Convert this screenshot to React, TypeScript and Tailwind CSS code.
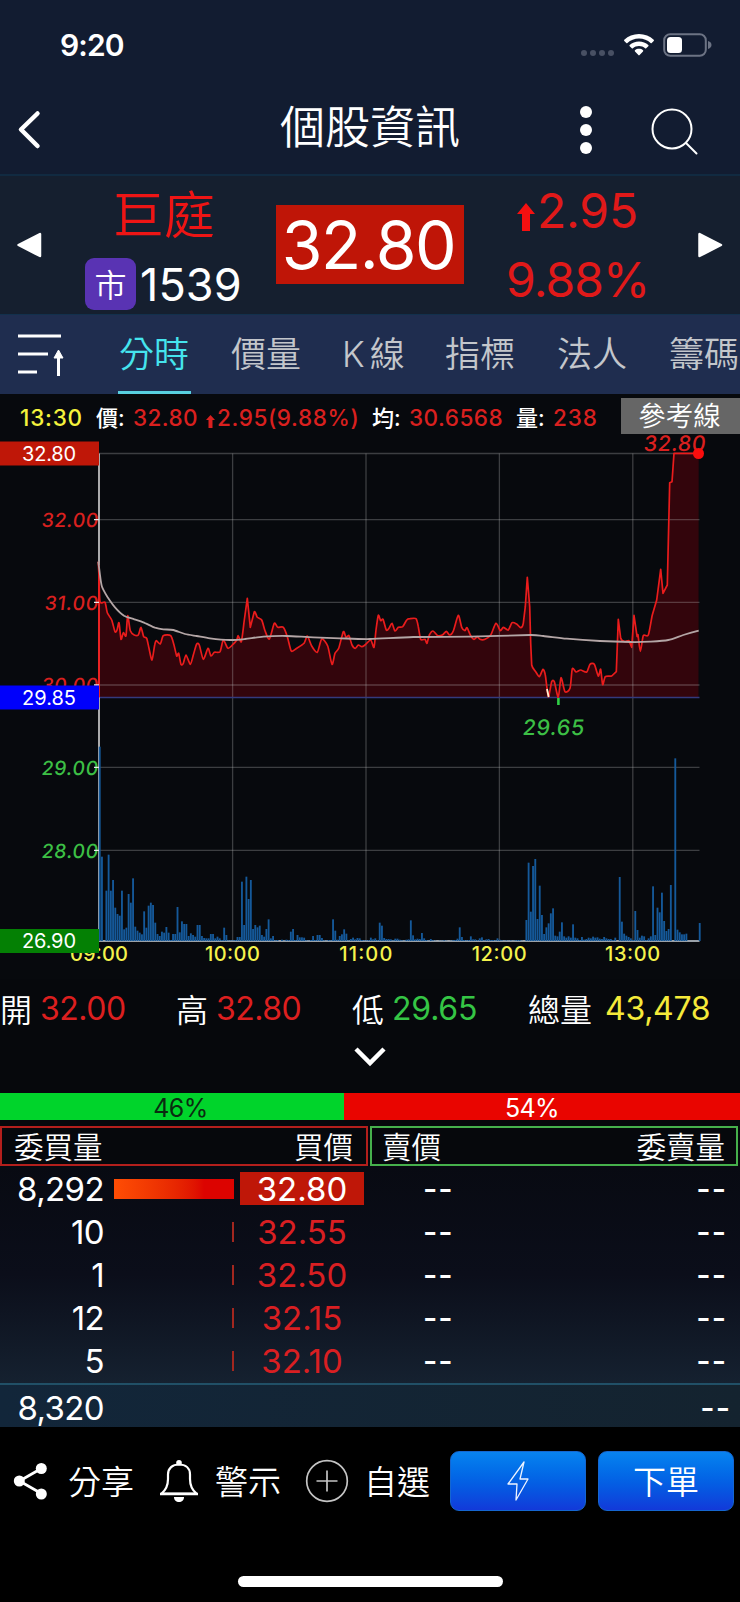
import React from "react";

const LATIN = "font-['Inter','Liberation_Sans',sans-serif]";
const HAN = "font-['Noto_Sans_CJK_TC',sans-serif]";

const PLOT = { left: 99, right: 699, top: 58.5, bottom: 546 };
const HOUR = 133.4;

/* Intraday price trace, in thirds of a chart pixel. */
const PRICE: number[][] = [
  [295, 515], [297, 560], [300, 635], [315, 637], [322, 668], [335, 690], [345, 725], [351, 720], [357, 698], [363, 748],
  [370, 728], [378, 737], [383, 677], [391, 722], [403, 735], [415, 735], [423, 712], [431, 740], [440, 745], [447, 775],
  [456, 810], [464, 765], [469, 752], [481, 762], [490, 737], [512, 737], [522, 765], [530, 798], [536, 790], [543, 823],
  [550, 820], [558, 795], [571, 823], [580, 795], [590, 762], [598, 765], [610, 808], [624, 775], [633, 798], [643, 787],
  [660, 785], [670, 750], [684, 775], [700, 762], [710, 750], [715, 737], [724, 755], [733, 690], [742, 625], [751, 712],
  [763, 665], [772, 682], [785, 690], [795, 722], [808, 747], [823, 700], [833, 712], [850, 712], [862, 740], [874, 783],
  [890, 775], [912, 760], [922, 738], [935, 768], [952, 787], [965, 747], [983, 768], [996, 823], [1005, 790], [1016, 775],
  [1030, 725], [1038, 742], [1047, 737], [1056, 765], [1066, 775], [1075, 765], [1085, 770], [1095, 765], [1112, 750],
  [1122, 772], [1128, 720], [1135, 676], [1142, 692], [1149, 688], [1159, 720], [1167, 715], [1176, 700], [1185, 723],
  [1195, 712], [1208, 710], [1220, 690], [1230, 686], [1248, 686], [1255, 710], [1262, 748], [1275, 748], [1281, 760],
  [1288, 735], [1299, 723], [1313, 737], [1327, 735], [1339, 724], [1349, 735], [1360, 723], [1375, 676], [1385, 712],
  [1395, 722], [1401, 713], [1412, 737], [1422, 748], [1432, 740], [1440, 748], [1455, 748], [1472, 735], [1488, 700],
  [1501, 722], [1510, 712], [1525, 720], [1536, 698], [1550, 702], [1562, 713], [1570, 700], [1576, 650], [1582, 562],
  [1589, 650], [1592, 760], [1595, 825], [1607, 845], [1618, 860], [1629, 838], [1636, 855], [1645, 920], [1655, 875],
  [1663, 875], [1675, 922], [1683, 863], [1695, 905], [1710, 895], [1717, 836], [1728, 846], [1742, 840], [1760, 846],
  [1770, 823], [1783, 823], [1795, 858], [1802, 838], [1808, 884], [1816, 860], [1835, 858], [1849, 845], [1855, 688],
  [1862, 745], [1875, 755], [1887, 752], [1895, 772], [1902, 676], [1911, 738], [1914, 735], [1921, 784], [1930, 737],
  [1945, 735], [1957, 675], [1970, 630], [1982, 538], [1989, 610], [2002, 585], [2009, 278], [2016, 275], [2022, 190],
  [2096, 190],
].map(([x, y]) => [x / 3, y / 3 - 5]);

const AVERAGE: number[][] = [
  [295, 515], [300, 555], [306, 590], [322, 620], [345, 652], [372, 677], [403, 688], [430, 697], [465, 713], [490, 718],
  [520, 720], [555, 732], [590, 738], [630, 745], [690, 750], [735, 747], [790, 740], [860, 738], [940, 742], [1020, 745],
  [1110, 747], [1240, 741], [1410, 740], [1590, 735], [1630, 738], [1700, 746], [1800, 753], [1890, 756], [1950, 755],
  [2005, 750], [2050, 735], [2096, 722],
].map(([x, y]) => [x / 3, y / 3 - 5]);

/* Volume per minute, 09:00 - 13:30. */
const VOLUME: number[] = [
  583, 253, 0, 151, 259, 151, 183, 100, 81, 76, 151, 35, 40, 141, 115, 188, 43, 31, 25, 20,
  89, 40, 106, 115, 108, 55, 21, 15, 28, 25, 42, 25, 3, 21, 21, 102, 26, 59, 51, 51,
  15, 23, 18, 13, 48, 48, 15, 9, 8, 8, 21, 21, 8, 13, 8, 3, 40, 18, 2, 2,
  2, 3, 12, 12, 178, 48, 193, 126, 183, 36, 48, 41, 46, 18, 13, 36, 65, 8, 15, 2,
  3, 0, 4, 1, 4, 3, 28, 36, 3, 18, 11, 11, 10, 2, 1, 3, 15, 3, 18, 18,
  9, 2, 1, 3, 2, 65, 31, 4, 15, 20, 35, 22, 2, 6, 10, 5, 9, 8, 3, 2,
  2, 3, 10, 5, 8, 3, 55, 46, 9, 6, 6, 5, 2, 7, 7, 4, 2, 1, 4, 5,
  62, 17, 5, 7, 6, 24, 8, 3, 1, 6, 2, 1, 0, 1, 1, 2, 1, 0, 1, 2,
  3, 7, 41, 12, 3, 2, 3, 14, 5, 5, 3, 8, 11, 2, 5, 6, 3, 3, 2, 8,
  4, 2, 1, 2, 1, 2, 1, 2, 3, 3, 1, 0, 63, 235, 88, 225, 246, 66, 166, 78,
  21, 41, 53, 83, 98, 16, 14, 28, 56, 14, 10, 14, 10, 50, 10, 8, 3, 12, 4, 6,
  10, 8, 13, 10, 11, 7, 6, 12, 8, 6, 6, 3, 10, 0, 192, 58, 22, 16, 12, 8,
  3, 90, 33, 10, 16, 14, 3, 8, 14, 164, 18, 100, 86, 145, 60, 30, 36, 168, 0, 548,
  34, 26, 20, 20, 22, 0, 0, 0, 0, 0, 54,
];

/* Lightly rounded curve through the points; steep moves stay straight. */
function curve(pts: number[][]) {
  return pts
    .map((p, i) => {
      if (i === 0) return `M${p[0].toFixed(1)} ${p[1].toFixed(1)}`;
      const a = pts[i - 1];
      const before = pts[i - 2] ?? a;
      const after = pts[i + 1] ?? p;
      const steep = Math.max(Math.abs(p[1] - a[1]), Math.abs(a[1] - before[1]), Math.abs(after[1] - p[1])) > 25;
      const k = steep ? 0 : 0.12;
      const c = [a[0] + (p[0] - before[0]) * k, a[1] + (p[1] - before[1]) * k, p[0] - (after[0] - a[0]) * k, p[1] - (after[1] - a[1]) * k];
      return `C${c.map((n) => n.toFixed(1)).join(" ")} ${p[0].toFixed(1)} ${p[1].toFixed(1)}`;
    })
    .join("");
}

function StatusBar() {
  return (
    <div className="flex h-[90px] items-center pl-[60px] pr-7">
      <span className={`${LATIN} text-[30px] font-semibold leading-none tracking-[-0.900px]`}>9:20</span>
      <div className="ml-auto flex items-center">
        <div className="mr-[10px] mt-4 flex gap-[3px]">
          {[0, 1, 2, 3].map((i) => (
            <i key={i} className="size-[6px] rounded-full bg-[#485063]" />
          ))}
        </div>
        <svg className="mr-[9px] h-[22px] w-[30px]" viewBox="0 0 30 22" fill="#fff">
          <path d="M15 0C9.300 0 4.100 2.200.3 5.800c-.4.300-.4.800 0 1.200l2 2.100c.300.300.8.300 1.100 0C6.500 6.200 10.500 4.600 15 4.600s8.500 1.600 11.600 4.500c.300.300.8.300 1.100 0l2-2.100c.4-.4.4-.9 0-1.200C25.900 2.200 20.700 0 15 0z" />
          <path d="M15 7.400c-3.600 0-6.900 1.400-9.300 3.600-.4.300-.4.800 0 1.200l2.100 2.100c.300.300.8.300 1.100 0 1.600-1.400 3.800-2.300 6.100-2.300s4.500.9 6.100 2.300c.300.300.8.300 1.100 0l2.100-2.100c.4-.4.4-.9 0-1.200-2.400-2.200-5.700-3.600-9.300-3.600z" />
          <path d="M15 14.800c-1.500 0-2.900.5-4 1.400-.4.300-.4.800 0 1.200l3.400 3.700c.300.400.8.400 1.200 0l3.400-3.700c.4-.4.4-.9 0-1.200-1.100-.9-2.500-1.400-4-1.400z" />
        </svg>
        <svg className="h-6 w-[49px]" viewBox="0 0 49 24">
          <rect x="1.200" y="1.200" width="41.600" height="21.600" rx="6" fill="none" stroke="#6c7384" strokeWidth="2" />
          <rect x="4" y="4" width="15" height="16" rx="3.500" fill="#fff" />
          <path d="M45 8c2.500.8 3.500 2.200 3.500 4S47.500 15.200 45 16z" fill="#6c7384" />
        </svg>
      </div>
    </div>
  );
}

function Header() {
  return (
    <div className="flex h-[84px] items-center">
      <svg className="ml-4 mt-[-7px] h-[42px] w-7" viewBox="0 0 28 42" fill="none" stroke="#fff" strokeWidth="4.500" strokeLinecap="round" strokeLinejoin="round">
        <path d="M21.500 5.500 5 21.500 21.500 38" />
      </svg>
      <h1 className={`${HAN} ml-[236px] mt-[-16px] text-[45px] font-[350] leading-none`}>個股資訊</h1>
      <div className="ml-[120px] mt-[-5px] flex flex-col gap-[6px]">
        {[0, 1, 2].map((i) => (
          <i key={i} className="size-3 rounded-full bg-white" />
        ))}
      </div>
      <svg className="ml-[58px] mt-[-2px] h-12 w-12" viewBox="0 0 48 48" fill="none" stroke="#fff" strokeWidth="2" strokeLinecap="round">
        <circle cx="22" cy="22" r="19.500" />
        <path d="m36 36 10.500 10.500" />
      </svg>
    </div>
  );
}

function UpArrow({ className }: { className: string }) {
  return (
    <svg className={className} viewBox="0 0 18 28" preserveAspectRatio="none" fill="currentColor">
      <path d="M9 0 18 11H13V28H5V11H0z" />
    </svg>
  );
}

function Quote() {
  return (
    <div className="flex h-[140px] border-t-2 border-[#112a41] bg-[#151f2f]">
      <div className="flex w-[84px] items-center pb-px pl-4">
        <svg className="h-[26px] w-[26px]" viewBox="0 0 26 26">
          <path d="M24 2v22L2.500 13z" fill="#fff" stroke="#fff" strokeWidth="2.500" strokeLinejoin="round" />
        </svg>
      </div>
      <div className="w-[192px] pt-[8px]">
        <div className={`${HAN} ml-[29px] text-[51px] font-[350] leading-[56px] text-[#ee1515]`}>巨庭</div>
        <div className="mt-[18px] flex items-center">
          <span className={`${HAN} ml-px flex h-[52px] w-[51px] items-center justify-center rounded-[9px] bg-[#5933b3] pb-[2px] text-[32px] font-[350] leading-none`}>市</span>
          <span className={`${LATIN} ml-[4px] text-[45px] leading-none tracking-[0.100px]`}>1539</span>
        </div>
      </div>
      <div className={`${LATIN} mt-[29px] flex h-[79px] w-[188px] items-center justify-center bg-[#bf1507] pr-[3px] pt-px text-[66px] leading-none tracking-[-1.500px]`}>
        32.80
      </div>
      <div className={`${LATIN} w-[182px] pl-[42px] pt-[10px] text-[48px] leading-none text-[#e01919]`}>
        <div className="flex h-[50px] items-center pl-[11px]">
          <UpArrow className="mr-[2px] mt-3 h-7 w-[18px] text-[#f51010]" />
          <span className="tracking-[-0.200px]">2.95</span>
        </div>
        <div className="mt-[20px] h-[50px] tracking-[-0.900px]">9.88%</div>
      </div>
      <div className="flex grow items-center pb-px pl-[51px]">
        <svg className="h-[26px] w-[26px]" viewBox="0 0 26 26">
          <path d="M2.500 2v22L24 13z" fill="#fff" stroke="#fff" strokeWidth="2.500" strokeLinejoin="round" />
        </svg>
      </div>
    </div>
  );
}

function Tabs() {
  return (
    <nav className={`${HAN} flex h-[80px] overflow-hidden border-t border-[#12304c] bg-[#1f2d4f] text-[35px] font-[350] leading-none text-[#c3c6cb]`}>
      <div className="w-[118px] shrink-0 pl-[17px] pt-[18px]">
        <svg className="h-11 w-12" viewBox="0 0 48 44" stroke="#fff" strokeWidth="3" fill="#fff">
          <path d="M1 3h43M1 21h30M1 39h19M41.500 43V22" />
          <path d="m41.500 17 4.500 8h-9z" strokeWidth="1" />
        </svg>
      </div>
      <span className="h-[79px] w-[73px] shrink-0 whitespace-nowrap border-b-[3px] border-[#58cfe0] pl-px pt-[19px] text-[#45e4ee]">分時</span>
      <span className="ml-[40px] w-[73px] shrink-0 pt-[19px]">價量</span>
      <span className="ml-[38px] w-[64px] shrink-0 whitespace-nowrap pt-[19px]">
        <span className={`${LATIN} mr-[5px]`}>K</span>線
      </span>
      <span className="ml-[39px] w-[73px] shrink-0 pt-[19px]">指標</span>
      <span className="ml-[39px] w-[73px] shrink-0 pt-[19px]">法人</span>
      <span className="ml-[39px] w-[73px] shrink-0 pt-[19px]">籌碼</span>
    </nav>
  );
}

function InfoLine() {
  return (
    <div className={`${LATIN} flex h-[48px] items-center whitespace-nowrap text-[22.500px] font-medium leading-none text-[#d9201f]`}>
      <span className="ml-5 w-[76px] tracking-[0.800px] text-[#f4f23c]">13:30</span>
      <span className="mt-[-3px] w-[37px] text-[22px] text-white"><span className={HAN}>價</span>:</span>
      <span className="w-[73px] tracking-[0.400px]">32.80</span>
      <UpArrow className="mr-[2px] mt-[6px] h-[13px] w-[9px]" />
      <span className="w-[155px] tracking-[0.600px]">2.95(9.88%)</span>
      <span className="mt-[-3px] w-[37px] text-[22px] text-white"><span className={HAN}>均</span>:</span>
      <span className="w-[107px] tracking-[0.500px]">30.6568</span>
      <span className="mt-[-3px] w-[37px] text-[22px] text-white"><span className={HAN}>量</span>:</span>
      <span className="tracking-[0.900px]">238</span>
      <span className={`${HAN} ml-auto mt-[-4px] flex h-9 w-[119px] items-center justify-center bg-[#666] pb-[3px] pr-[2px] text-[27.500px] font-[350] leading-none text-white`}>參考線</span>
    </div>
  );
}

function Tag({ y, fill, label }: { y: number; fill: string; label: string }) {
  return (
    <g>
      <rect x="0" y={y - 12} width="99" height="24" fill={fill} />
      <text x="49" y={y + 7} textAnchor="middle" fontSize="20" fill="#fff" textLength="54">{label}</text>
    </g>
  );
}

function Slanted({ x, y, width, size = 19.5, children }: { x: number; y: number; width: number; size?: number; children: string }) {
  return (
    <text transform={`translate(${x} ${y}) skewX(-7)`} fontSize={size} textLength={width}>{children}</text>
  );
}

function Chart() {
  const base = 302.5;
  const price = curve(PRICE);
  return (
    <svg className={`${LATIN} block h-[585px] w-[740px]`} viewBox="0 0 740 585" fill="none">
      <path d={`${price}L${PLOT.right - 0.5} ${base}H${PRICE[0][0]}z`} fill="#33050c" />
      <g stroke="#b8b8b8" strokeOpacity="0.300" strokeWidth="1.300">
        {[58.5, 124.7, 207.4, 290, 372.4, 455.400].map((y) => (
          <path key={y} d={`M99 ${y}H699.500`} />
        ))}
        {[1, 2, 3, 4].map((h) => (
          <path key={h} d={`M${99.2 + h * HOUR} 58.500V546`} />
        ))}
      </g>
      <path d={`M99 ${base}H699.500`} stroke="#343a7d" strokeWidth="1.500" />
      <path d="M99 58.500V546" stroke="#f1f1f1" strokeWidth="1.400" />
      <path d="M99 546H699.500" stroke="#cdd5dc" strokeWidth="1.400" />
      {VOLUME.map((v, i) => (
        <rect key={i} x={98.800 + i * 2.2222} y={PLOT.bottom - v / 3} width="1.850" height={v / 3} fill="#15599a" />
      ))}
      <path d={`M99 170V${base}`} stroke="#f01414" strokeWidth="1.800" />
      <path d={price} stroke="#ea1c1c" strokeWidth="1.700" strokeLinejoin="round" />
      <path d={curve(AVERAGE)} stroke="#b4a6a6" strokeWidth="1.800" strokeLinejoin="round" />
      <path d="m547 294 1.700 8" stroke="#fff0d0" strokeWidth="1.800" />
      <path d="M558.400 303v7" stroke="#2fd046" strokeWidth="2.600" />
      <g fontWeight="500">
        <g fill="#d9201f">
          <Slanted x={41} y={132} width={56.5}>32.00</Slanted>
          <Slanted x={44} y={214.5} width={53.5}>31.00</Slanted>
          <Slanted x={41} y={297} width={56.5}>30.00</Slanted>
          <Slanted x={643} y={55.5} width={62} size={21.5}>32.80</Slanted>
        </g>
        <g fill="#3cbf45">
          <Slanted x={41} y={380} width={56.5}>29.00</Slanted>
          <Slanted x={41} y={462.5} width={56.5}>28.00</Slanted>
          <Slanted x={522} y={340} width={61.5} size={21.500}>29.65</Slanted>
        </g>
      </g>
      <path d="M94 124.700h5M94 207.400h5M94 290h5M94 372.400h5M94 455.400h5" stroke="#e8e8e8" strokeWidth="1.300" />
      <circle cx="698.500" cy="58.500" r="5.500" fill="#fb0d0d" />
      <g fontSize="20" fontWeight="500" fill="#f4f24c" textAnchor="middle">
        {["09:00", "10:00", "11:00", "12:00", "13:00"].map((t, i) => (
          <text key={t} x={99 + i * HOUR} y="565.500" textLength={i === 0 ? 58 : i === 2 ? 53 : 55}>{t}</text>
        ))}
      </g>
      <Tag y={58.5} fill="#bf1708" label="32.80" />
      <Tag y={302.5} fill="#0000fb" label="29.85" />
      <Tag y={546} fill="#048004" label="26.90" />
    </svg>
  );
}

function Stat({ label, value, tone }: { label: string; value: string; tone: string }) {
  return (
    <div className="flex items-center whitespace-nowrap leading-none">
      <span className={`${HAN} mt-[-3px] text-[32px] font-[350]`}>{label}</span>
      <span className={`${LATIN} text-[32px] ${tone}`}>{value}</span>
    </div>
  );
}

function Summary() {
  return (
    <div className="h-[114px]">
      <div className="grid grid-cols-[176px_176px_176px_1fr] pt-[14px]">
        <Stat label="開" value="32.00" tone="ml-2 tracking-[-0.500px] text-[#dc1f1f]" />
        <Stat label="高" value="32.80" tone="ml-2 tracking-[-0.500px] text-[#dc1f1f]" />
        <Stat label="低" value="29.65" tone="ml-2 tracking-[-0.200px] text-[#35c545]" />
        <Stat label="總量" value="43,478" tone="ml-[13px] tracking-[-0.300px] text-[#f5ea3a]" />
      </div>
      <svg className="mx-auto mt-[22px] block h-5 w-[34px]" viewBox="0 0 34 20" fill="none" stroke="#fff" strokeWidth="4.500">
        <path d="M3 2 17 16 31 2" />
      </svg>
    </div>
  );
}

const BIDS = [
  ["8,292", "32.80"],
  ["10", "32.55"],
  ["1", "32.50"],
  ["12", "32.15"],
  ["5", "32.10"],
];

function Dashes() {
  return <span className="inline-block h-9 whitespace-nowrap text-[31px] font-medium leading-9 tracking-[1px]">--</span>;
}

function OrderBook() {
  return (
    <section>
      <div className={`${LATIN} flex h-[27px] text-[25px] leading-[30px] tracking-[-0.600px]`}>
        <div className="w-[344px] bg-[#00d42b] pl-[17px] text-center text-[#0b2b10]">46%</div>
        <div className="grow bg-[#e90500] pr-[20px] text-center">54%</div>
      </div>
      <div className={`${HAN} mt-[6px] flex gap-[2px] pr-[2px] text-[29.500px] font-[350] leading-[34px]`}>
        <div className="flex h-10 w-[368px] justify-between border-2 border-[#b31f1c] pl-[12px] pr-[13px]">
          <span>委買量</span>
          <span>買價</span>
        </div>
        <div className="flex h-10 w-[368px] justify-between border-2 border-[#46b04c] pl-[10px] pr-[11px]">
          <span>賣價</span>
          <span>委賣量</span>
        </div>
      </div>
      <div className={`${LATIN} h-[217px] bg-linear-to-b from-[#080a12] via-[#0b0e1a] to-[#152130] pt-[1px] text-[33px] leading-none`}>
        {BIDS.map(([qty, price], i) => (
          <div key={price} className="flex h-[43px] items-center">
            <span className="w-[104px] pt-[2px] text-right tracking-[-0.600px]">{qty}</span>
            <span className="flex w-[130px] justify-end">
              {i === 0 ? (
                <i className="h-5 w-[120px] bg-linear-to-r from-[#ff4d04] to-[#dc0300] to-75%" />
              ) : (
                <i className="h-5 w-[2px] bg-[#a3271f]" />
              )}
            </span>
            <span
              className={
                i === 0
                  ? "ml-[6px] flex h-[33px] w-[124px] items-center justify-center bg-[#bf1708] pt-px"
                  : "ml-[6px] flex h-[33px] w-[124px] items-center justify-center pt-[2px] text-[#d91f22]"
              }
            >
              {price}
            </span>
            <span className="ml-[59px] w-[60px]"><Dashes /></span>
            <span className="ml-auto mr-[13px]"><Dashes /></span>
          </div>
        ))}
      </div>
      <div className={`${LATIN} flex h-[44px] items-center justify-between border-t-2 border-[#215067] bg-linear-to-r from-[#12263a] to-[#14232f] pr-[9px] pt-[4px] text-[33px] leading-none`}>
        <span className="w-[104px] text-right tracking-[-0.600px]">8,320</span>
        <Dashes />
      </div>
    </section>
  );
}

function Actions() {
  const text = `${HAN} mt-[-2px] whitespace-nowrap text-[33px] font-[350] leading-none`;
  const button = "flex h-[60px] w-[136px] items-center justify-center rounded-[9px] border border-[#1566d0] bg-linear-to-b from-[#0983ef] to-[#1239d9]";
  return (
    <footer className="flex grow flex-col bg-black">
      <div className="mt-6 flex h-[60px] items-center">
        <svg className="ml-[13px] h-10 w-9" viewBox="0 0 36 40" fill="#fff">
          <path d="M28.300 7.500 6.500 20l21.800 12.500" fill="none" stroke="#fff" strokeWidth="2.800" />
          <circle cx="28.300" cy="7.500" r="5.500" />
          <circle cx="6.300" cy="20" r="5.500" />
          <circle cx="28.300" cy="33" r="5.500" />
        </svg>
        <span className={`${text} ml-[19px]`}>分享</span>
        <svg className="ml-[25px] h-[44px] w-10" viewBox="0 0 40 44" fill="none" stroke="#fff" strokeWidth="2.200" strokeLinejoin="round">
          <path d="M2.500 34.500C7 31 9 26.500 9 20v-4.500C9 9 13.500 5.500 20 5.500S31 9 31 15.500V20c0 6.500 2 11 6.500 14.500z" />
          <circle cx="20" cy="3.800" r="2.800" fill="#fff" stroke="none" />
          <path d="M1 35h38" strokeWidth="2.600" />
          <path d="M15 38h10c0 3.200-2.200 5-5 5s-5-1.800-5-5z" fill="#fff" stroke="none" />
        </svg>
        <span className={`${text} ml-[16px]`}>警示</span>
        <svg className="ml-[24px] h-[44px] w-[44px]" viewBox="0 0 44 44" fill="none" stroke="#c4c4c4" strokeWidth="1.700">
          <circle cx="22" cy="22" r="20.300" />
          <path d="M22 11.500v21M11.500 22h21" />
        </svg>
        <span className={`${text} ml-[15px]`}>自選</span>
        <button className={`${button} ml-auto`}>
          <svg className="h-10 w-6" viewBox="0 0 24 40" fill="none" stroke="#eef4ff" strokeWidth="1.300" strokeLinejoin="round">
            <path d="M18 1 2 23h9L10 39 22 18h-8z" />
          </svg>
        </button>
        <button className={`${button} ml-3 mr-[6px]`}>
          <span className={text}>下單</span>
        </button>
      </div>
      <div className="mx-auto mt-[65px] h-[11px] w-[265px] rounded-full bg-white" />
    </footer>
  );
}

export default function App() {
  return (
    <main className="flex h-[1602px] w-[740px] flex-col overflow-hidden bg-[#06080c] text-white">
      <div className="bg-[#121c31]">
        <StatusBar />
        <Header />
      </div>
      <Quote />
      <Tabs />
      <div className="h-[585px] bg-[#07090d]">
        <InfoLine />
        <div className="-mt-[47px] flex h-[585px]">
          <Chart />
        </div>
      </div>
      <Summary />
      <OrderBook />
      <Actions />
    </main>
  );
}
